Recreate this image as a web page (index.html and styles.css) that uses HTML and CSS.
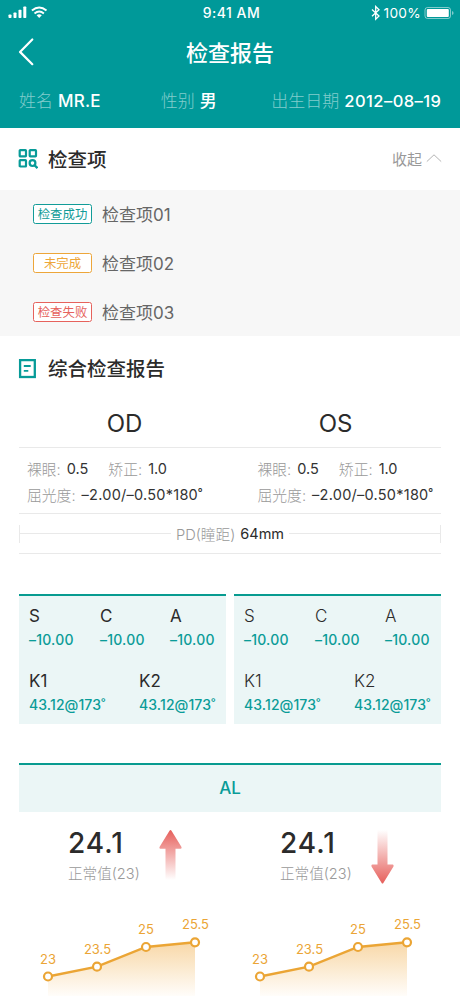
FILE: index.html
```html
<!DOCTYPE html>
<html lang="zh-CN">
<head>
<meta charset="utf-8">
<meta name="viewport" content="width=device-width">
<title>检查报告</title>
<link rel="stylesheet" href="styles.css">
</head>
<body>
<header class="header">
  <div class="status">
    <div class="status-left">
      <svg width="40" height="14" viewBox="0 0 40 14" fill="#fff">
        <rect x="0.5" y="8.5" width="3" height="3.5" rx=".7"/><rect x="5.5" y="6.5" width="3" height="5.5" rx=".7"/><rect x="10.5" y="3.8" width="3" height="8.2" rx=".7"/><rect x="15.3" y="0.5" width="3" height="11.5" rx=".7"/>
        <g fill="none" stroke="#fff" stroke-width="1.9"><path d="M23.9 4.5Q31.2-1.7 38.5 4.5"/><path d="M26.5 7.4Q31.2 3.6 35.9 7.4"/></g><path d="M28.6 9.3Q31.2 7.4 33.8 9.3L31.2 12Z"/>
      </svg>
    </div>
    <div class="status-time">9:41 AM</div>
    <div class="status-right">
      <svg width="10" height="16" viewBox="0 0 10 16" fill="none" stroke="#fff" stroke-width="1.3"><path d="M1 4.5L8 11 4.7 14.2V1.5L8 4.8 1 11.2"/></svg>
      <span class="battery-text">100%</span>
      <svg width="31" height="14" viewBox="0 0 31 14"><rect x="1" y="1.5" width="25.5" height="11" rx="2.5" fill="none" stroke="#fff" stroke-opacity=".5"/><rect x="2.8" y="3" width="22" height="8" rx="1" fill="#fff"/><path d="M28 5v4q1.6-.5 1.6-2T28 5" fill="#fff" fill-opacity=".5"/></svg>
    </div>
  </div>
  <div class="nav">
    <svg class="back" width="18" height="30" viewBox="0 0 18 30" fill="none" stroke="#fff" stroke-width="2.2" stroke-linecap="round" stroke-linejoin="round"><path d="M14.3 2.5L2 14.9 14.3 27.2"/></svg>
    <h1 class="title">检查报告</h1>
  </div>
  <div class="patient">
    <div><span class="dim">姓名</span><b class="name">MR.E</b></div>
    <div class="gender"><span class="dim">性别</span><b>男</b></div>
    <div><span class="dim">出生日期</span><b class="birth">2012–08–19</b></div>
  </div>
</header>
<section>
  <div class="heading">
    <svg class="heading-icon" width="20" height="20" viewBox="0 0 20 20" fill="none" stroke="#079b98" stroke-width="2.2"><rect x="1.7" y="1.1" width="6.3" height="6.3" rx=".6"/><rect x="11.7" y="1.1" width="6.3" height="6.3" rx=".6"/><rect x="1.7" y="11.2" width="6.3" height="6.3" rx=".6"/><circle cx="14.5" cy="14.1" r="2.9"/><path d="M16.5 16.1L19.5 19.1"/></svg>
    <h2>检查项</h2>
    <div class="collapse">收起<svg width="16" height="10" viewBox="0 0 16 10" fill="none" stroke="#b4b4b4"><path d="M.8 8.6L8 1.8 15.2 8.6"/></svg></div>
  </div>
  <ul class="checks">
    <li><span class="tag ok">检查成功</span>检查项01</li>
    <li><span class="tag wait">未完成</span>检查项02</li>
    <li><span class="tag fail">检查失败</span>检查项03</li>
  </ul>
</section>
<section>
  <div class="heading report-heading">
    <svg class="heading-icon" width="20" height="20" viewBox="0 0 20 20" fill="none" stroke="#079b98"><rect x="2.1" y="1.1" width="14.7" height="16.9" stroke-width="2.3"/><path d="M5.8 7H12.7M5.8 11.8H10.3" stroke-width="1.8"/></svg>
    <h2>综合检查报告</h2>
  </div>
  <div class="eyes"><div>OD</div><div>OS</div></div>
  <div class="vision">
    <div>
      <p><i>裸眼:</i><span>0.5</span><i class="second">矫正:</i><span>1.0</span></p>
      <p><i>屈光度:</i><span class="diopter">–2.00/–0.50*180˚</span></p>
    </div>
    <div>
      <p><i>裸眼:</i><span>0.5</span><i class="second">矫正:</i><span>1.0</span></p>
      <p><i>屈光度:</i><span class="diopter">–2.00/–0.50*180˚</span></p>
    </div>
  </div>
  <div class="pd"><span class="rule left"></span><span class="pd-label">PD(瞳距)</span><span class="pd-value">64mm</span><span class="rule right"></span></div>
</section>
<section class="cards">
  <div class="card strong">
    <dl><dt>S</dt><dd>–10.00</dd></dl><dl><dt>C</dt><dd>–10.00</dd></dl><dl><dt>A</dt><dd>–10.00</dd></dl>
    <dl class="k1"><dt>K1</dt><dd>43.12@173˚</dd></dl><dl class="k2"><dt>K2</dt><dd>43.12@173˚</dd></dl>
  </div>
  <div class="card">
    <dl><dt>S</dt><dd>–10.00</dd></dl><dl><dt>C</dt><dd>–10.00</dd></dl><dl><dt>A</dt><dd>–10.00</dd></dl>
    <dl class="k1"><dt>K1</dt><dd>43.12@173˚</dd></dl><dl class="k2"><dt>K2</dt><dd>43.12@173˚</dd></dl>
  </div>
</section>
<section>
  <div class="al">AL</div>
  <div class="axial">
    <div class="eye">
      <div class="reading"><div><strong>24.1</strong><small>正常值(23)</small></div>
        <svg width="24" height="56" viewBox="0 0 24 56"><defs><linearGradient id="up" x1="0" y1="0" x2="0" y2="1"><stop stop-color="#e65f5b"/><stop offset="1" stop-color="#e65f5b" stop-opacity="0"/></linearGradient></defs><path d="M10.5 1.7Q11.5.2 12.5 1.7L22.5 18Q23 19.7 21.7 19.7H16.5V51H6.5V19.7H1.3Q0 19.7 .5 18Z" fill="url(#up)"/></svg>
      </div>
      <svg class="chart" width="200" height="84" viewBox="0 0 200 84"><defs><linearGradient id="area" x1="0" y1="0" x2="0" y2="1"><stop stop-color="#f8d8a8"/><stop offset="1" stop-color="#fffdfa"/></linearGradient></defs><path d="M29 65L78 55 127 35.5 176 30.5V84H29Z" fill="url(#area)"/><path d="M29 64.5L78 54.7 127 35 176 30.3" fill="none" stroke="#eba535" stroke-width="2.4"/><g fill="#fff" stroke="#eba535" stroke-width="2.2"><circle cx="29" cy="64.5" r="4"/><circle cx="78" cy="54.7" r="4"/><circle cx="127" cy="35" r="4"/><circle cx="176" cy="30.3" r="4"/></g><g class="labels"><text x="29" y="51.7">23</text><text x="78.5" y="41.5">23.5</text><text x="127" y="22">25</text><text x="176.5" y="17">25.5</text></g></svg>
    </div>
    <div class="eye">
      <div class="reading"><div><strong>24.1</strong><small>正常值(23)</small></div>
        <svg width="24" height="56" viewBox="0 0 24 56"><defs><linearGradient id="down" x1="0" y1="0" x2="0" y2="1"><stop stop-color="#e65f5b" stop-opacity="0"/><stop offset="1" stop-color="#e65f5b"/></linearGradient></defs><path d="M10.5 53.7Q11.5 55.5 12.5 53.7L22.5 37.4Q23 35.5 21.7 35.5H16.5V1H6.5V35.5H1.3Q0 35.5 .5 37.4Z" fill="url(#down)"/></svg>
      </div>
      <svg class="chart" width="200" height="84" viewBox="0 0 200 84"><path d="M29 65L78 55 127 35.5 176 30.5V84H29Z" fill="url(#area)"/><path d="M29 64.5L78 54.7 127 35 176 30.3" fill="none" stroke="#eba535" stroke-width="2.4"/><g fill="#fff" stroke="#eba535" stroke-width="2.2"><circle cx="29" cy="64.5" r="4"/><circle cx="78" cy="54.7" r="4"/><circle cx="127" cy="35" r="4"/><circle cx="176" cy="30.3" r="4"/></g><g class="labels"><text x="29" y="51.7">23</text><text x="78.5" y="41.5">23.5</text><text x="127" y="22">25</text><text x="176.5" y="17">25.5</text></g></svg>
    </div>
  </div>
</section>
</body>
</html>
```
FILE: styles.css
```css
* { box-sizing: border-box; }
body, h1, h2, p, ul, dl, dt, dd { margin: 0; padding: 0; }
body { width: 460px; height: 996px; overflow: hidden; background: #fff; color: #2b2b2b; font-family: Inter, "Noto Sans CJK SC", sans-serif; font-size: 15px; white-space: nowrap; }
svg { display: block; flex: none; }
i { font-style: normal; }
.header { height: 128px; background: #099; color: #fff; }
.status { display: grid; grid-template-columns: 1fr auto 1fr; align-items: center; height: 26px; padding: 0 5px 0 8px; }
.status-time { margin-top: -1px; font-size: 14px; font-weight: 500; letter-spacing: .5px; }
.status-right { display: flex; align-items: center; justify-content: flex-end; }
.battery-text { margin: 0 3px 0 3px; font-size: 13.7px; letter-spacing: .3px; }
.nav { display: grid; grid-template-columns: 60px 1fr 60px; align-items: center; height: 52px; }
.back { margin-left: 18px; }
.title { margin-top: 2px; text-align: center; font-size: 22px; line-height: 32px; font-weight: 500; }
.patient { display: flex; height: 46px; padding: 0 19px; line-height: 46px; font-size: 17px; }
.patient b { margin-left: 5px; font-weight: 500; font-size: 17px; }
.patient .name { letter-spacing: .2px; }
.patient .birth { font-size: 16.5px; letter-spacing: .45px; margin-right: -.45px; }
.gender { margin: 0 auto 0 60px; }
.dim { color: #80cccc; font-weight: 300; }
.heading { display: flex; align-items: center; height: 62px; padding: 0 19px 0 18px; }
.heading-icon { margin-right: 10px; }
h2 { margin-top: 1px; font-size: 19.5px; line-height: 30px; font-weight: 500; }
.collapse { display: flex; align-items: center; gap: 4px; margin: -2px -1px 0 auto; color: #999; font-size: 15px; }
.checks { height: 146px; list-style: none; background: #f7f7f7; color: #666; }
.checks li { display: flex; align-items: center; height: 49px; padding: 0 0 2px 33px; font-size: 17px; }
.tag { display: flex; align-items: center; justify-content: center; width: 59px; height: 20px; padding-top: 2px; margin-right: 10px; border: 1.4px solid; border-radius: 2.5px; background: #fff; font-size: 12.4px; line-height: 18px; }
.ok { color: #129c98; }
.wait { color: #eda63a; }
.fail { color: #e6625c; }
.report-heading { height: 65px; }
.eyes { display: grid; grid-template-columns: 1fr 1fr; height: 47px; margin: 0 19px; border-bottom: 1px solid #e9e9e9; text-align: center; font-size: 24px; line-height: 46px; }
.vision { display: grid; grid-template-columns: 230.5px 1fr; height: 66px; margin: 0 19px; padding: 7px 0 0 8px; border-bottom: 1px solid #e9e9e9; }
.vision p { display: flex; align-items: center; height: 26px; }
.vision i, .pd-label { color: #999; font-weight: 300; }
.vision i { font-size: 14.8px; }
.vision span { margin-left: 6px; color: #333; font-size: 14.5px; }
.vision .second { margin-left: 20px; }
.vision .diopter { letter-spacing: .25px; }
.pd { display: flex; align-items: center; height: 40px; margin: 0 19px; border-bottom: 1px solid #e9e9e9; }
.pd-label { margin-left: 5px; font-size: 14.7px; }
.pd-value { margin: 0 5px; font-size: 14.5px; }
.rule { flex: 1; height: 18px; background: linear-gradient(#e9e9e9, #e9e9e9) center / 100% 1px no-repeat; }
.rule.left { border-left: 1px solid #e9e9e9; }
.rule.right { border-right: 1px solid #e9e9e9; }
.cards { display: grid; grid-template-columns: 1fr 1fr; gap: 8px; padding: 40px 19px 39px; }
.card { display: grid; grid-template-columns: 71px 39px 31px 1fr; align-content: start; height: 130px; padding: 8px 0 0 10px; border-top: 2px solid #079b90; background: #ebf6f6; }
.card dl { height: 65px; }
.card dl:nth-child(2) { grid-column: 2 / 3; }
.card dl:nth-child(3) { grid-column: 3 / 5; padding-left: 31px; }
.card dt { font-size: 17px; line-height: 25px; font-weight: 300; }
.card.strong dt { font-weight: 400; }
.card dd { color: #0a9c98; font-size: 14px; line-height: 22px; font-weight: 500; letter-spacing: .2px; }
.card .k1 { grid-column: 1 / 3; }
.card .k2 { grid-column: 3 / 5; }
.card .k1 dd, .card .k2 dd { letter-spacing: .1px; }
.al { height: 49px; margin: 0 19px; border-top: 2px solid #079b90; background: #ebf6f6; color: #0a9c98; text-align: center; font-size: 17px; line-height: 47px; font-weight: 500; }
.axial { display: grid; grid-template-columns: 212px 212px; padding-left: 19px; }
.reading { display: flex; height: 100px; padding: 17px 0 0 49px; }
.reading > div { width: 91px; }
.reading strong { display: block; font-size: 28px; line-height: 28px; font-weight: 500; letter-spacing: 1px; }
.reading small { display: block; margin-top: 6px; color: #999; font-size: 14.6px; line-height: 22px; font-weight: 300; }
.labels { fill: #eba535; font-size: 13px; text-anchor: middle; }
```
